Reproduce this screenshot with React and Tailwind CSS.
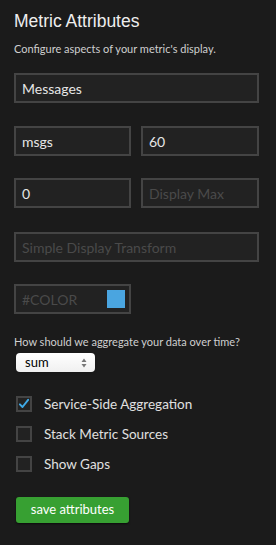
// Metric attributes side panel
function Field({ value, placeholder, className = "" }) {
  return (
    <div
      className={`h-[30px] border-2 border-[#444] bg-[#222] px-[6px] flex items-center text-[14px] ${className}`}
    >
      {value ? (
        <span className="text-[#e6e6e6]">{value}</span>
      ) : (
        <span className="text-[#4a4a4a]">{placeholder}</span>
      )}
    </div>
  );
}

function Check({ checked, label }) {
  return (
    <div className="flex items-center h-[16px]">
      <div className="w-[16px] h-[16px] border-2 border-[#444] bg-[#222] flex items-center justify-center shrink-0">
        {checked && (
          <svg viewBox="0 0 16 16" className="w-[14px] h-[14px]">
            <path d="M2.5 8.5 L6 12 L13.5 2.5" fill="none" stroke="#3fa9e6" strokeWidth="2.6" strokeLinecap="round" strokeLinejoin="round" />
          </svg>
        )}
      </div>
      <span className="ml-[12px] text-[13.5px] text-[#e0e0e0]">{label}</span>
    </div>
  );
}

export default function App() {
  return (
    <div
      className="w-[276px] h-[545px] bg-[#1b1b1b] px-[14px] pt-[10px]"
      style={{ fontFamily: "Lato, 'Open Sans', sans-serif" }}
    >
      <h1 className="font-['Liberation_Sans',sans-serif] text-[17.5px] leading-[22px] text-[#eeeeee]">Metric Attributes</h1>
      <p className="mt-[10px] text-[11px] leading-[14px] text-[#cfcfcf]">
        Configure aspects of your metric's display.
      </p>

      <Field value="Messages" className="mt-[17px] w-[245px]" />

      <div className="mt-[23px] flex gap-[10px]">
        <Field value="msgs" className="w-[117px]" />
        <Field value="60" className="w-[118px]" />
      </div>

      <div className="mt-[22px] flex gap-[10px]">
        <Field value="0" className="w-[117px]" />
        <Field placeholder="Display Max" className="w-[118px]" />
      </div>

      <Field placeholder="Simple Display Transform" className="mt-[24px] w-[245px]" />

      <div className="mt-[22px] w-[117px] h-[30px] border-2 border-[#444] bg-[#222] pl-[6px] pr-[4px] flex items-center justify-between text-[14px]">
        <span className="text-[#4a4a4a]">#COLOR</span>
        <span className="w-[18px] h-[18px] bg-[#4aa5e0]" />
      </div>

      <p className="mt-[21px] text-[11px] leading-[14px] text-[#cfcfcf]">
        How should we aggregate your data over time?
      </p>
      <div className="mt-[4px] ml-[2px] w-[79px] h-[19px] rounded-[4px] bg-gradient-to-b from-white to-[#f0f0f0] flex items-center justify-between pl-[9px] pr-[8px] shadow">
        <span className="text-[13px] text-black">sum</span>
        <svg viewBox="0 0 6 10" className="w-[6px] h-[10px]">
          <path d="M3 0.5 L5.5 4 H0.5 Z M3 9.5 L5.5 6 H0.5 Z" fill="#777" />
        </svg>
      </div>

      <div className="mt-[24px] ml-[2px] flex flex-col gap-[14px]">
        <Check checked label="Service-Side Aggregation" />
        <Check label="Stack Metric Sources" />
        <Check label="Show Gaps" />
      </div>

      <button className="mt-[25px] ml-[2px] w-[113px] h-[26px] rounded-[3px] bg-[#37a032] text-white text-[13px] shadow-[0_1px_2px_rgba(0,0,0,0.6)]">
        save attributes
      </button>
    </div>
  );
}
